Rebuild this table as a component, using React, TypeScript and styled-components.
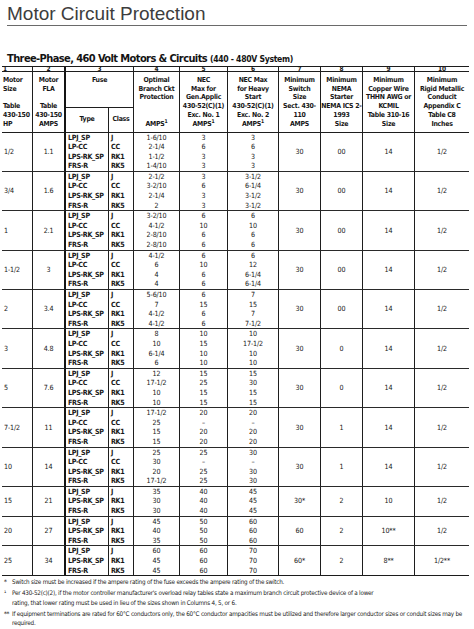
import React from 'react';
import styled, { createGlobalStyle } from 'styled-components';

const Global = createGlobalStyle`
  html, body { margin: 0; padding: 0; background: #fff; }
  body {
    width: 474px; height: 629px; overflow: hidden;
    font-family: "DejaVu Sans Condensed", "Liberation Sans", Arial, sans-serif;
    color: #161616;
  }
  * { box-sizing: border-box; }
`;

const COLS = '31px 33px 43px 25px 46px 48px 51px 42px 42px 52px 54px';

const Page = styled.div`
  display: flex;
  flex-direction: column;
`;

const Title = styled.h1`
  margin: 0 7px;
  padding-top: 3px;
  font-family: "Liberation Sans", Arial, sans-serif;
  font-weight: 400;
  font-size: 19px;
  line-height: 22px;
  color: #3d3d3d;
  border-bottom: 1.5px solid #6a6a6a;
`;

const Subtitle = styled.h2`
  margin: 25.5px 0 0 7px;
  font-size: 11px;
  letter-spacing: -0.6px;
  line-height: 13px;
  font-weight: 700;
  color: #141414;
  white-space: nowrap;
`;

const SubSmall = styled.span`
  font-size: 8.6px;
  letter-spacing: -0.3px;
`;

const Table = styled.div`
  margin-left: 2px;
  width: 467px;
  display: grid;
  grid-template-columns: ${COLS};
  border-top: 1.5px solid #1c1c1c;
  border-bottom: 1.5px solid #1c1c1c;
`;

const rightBorder = (end?: boolean, thick?: boolean) =>
  end ? 'none' : thick ? '2px solid #141414' : '1px solid #1e1e1e';

const NumCell = styled.div<{ $span?: number; $end?: boolean; $left?: boolean; $thick?: boolean }>`
  grid-column: span ${p => p.$span ?? 1};
  height: 5.5px;
  border-right: ${p => rightBorder(p.$end, p.$thick)};
  border-bottom: 1px solid #1e1e1e;
  font-size: 6.5px;
  font-weight: 700;
  line-height: 4.8px;
  text-align: ${p => (p.$left ? 'left' : 'center')};
  padding-left: ${p => (p.$left ? '1px' : '0')};
`;

const HeadCell = styled.div<{ $end?: boolean; $left?: boolean; $thick?: boolean }>`
  height: 60.5px;
  border-right: ${p => rightBorder(p.$end, p.$thick)};
  border-bottom: 1px solid #1e1e1e;
  display: flex;
  flex-direction: column;
  justify-content: space-between;
  padding: ${p => (p.$left ? '4px 0 3px 1px' : '4px 0 3px')};
  font-size: 6.9px;
  letter-spacing: -0.25px;
  font-weight: 700;
  line-height: 8.7px;
  text-align: ${p => (p.$left ? 'left' : 'center')};
  white-space: nowrap;
`;

const HeadBlock = styled.div`
  display: flex;
  flex-direction: column;
`;

const HeadLine = styled.div``;

const FuseHead = styled.div`
  grid-column: span 2;
  height: 60.5px;
  border-right: 1px solid #1e1e1e;
  border-bottom: 1px solid #1e1e1e;
  display: grid;
  grid-template-columns: 43px 24px;
  grid-template-rows: 35.5px 1fr;
  font-size: 6.9px;
  letter-spacing: -0.25px;
  font-weight: 700;
  line-height: 8.7px;
`;

const FuseTitle = styled.div`
  grid-column: span 2;
  text-align: center;
  padding-top: 4px;
  border-bottom: 1px solid #1e1e1e;
`;

const FuseSub = styled.div<{ $end?: boolean }>`
  display: flex;
  align-items: center;
  justify-content: center;
  border-right: ${p => (p.$end ? 'none' : '1px solid #1e1e1e')};
`;

const Sup = styled.sup`
  font-size: 5px;
  line-height: 0;
  vertical-align: 3px;
`;

const Cell = styled.div<{ $left?: boolean; $end?: boolean; $last?: boolean; $bold?: boolean; $thick?: boolean }>`
  border-right: ${p => rightBorder(p.$end, p.$thick)};
  border-bottom: ${p => (p.$last ? 'none' : '1px solid #2a2a2a')};
  display: flex;
  flex-direction: column;
  justify-content: center;
  align-items: ${p => (p.$left ? 'flex-start' : 'center')};
  padding-left: ${p => (p.$left ? '2px' : '0')};
  font-size: 7.1px;
  letter-spacing: ${p => (p.$bold ? '-0.3px' : '-0.15px')};
  line-height: 9.6px;
  font-weight: ${p => (p.$bold ? 700 : 400)};
  white-space: nowrap;
`;

const Line = styled.div`
  height: 9.6px;
`;

const Notes = styled.div`
  padding: 1px 0 0 4px;
  display: flex;
  flex-direction: column;
  gap: 1px;
`;

const Note = styled.div`
  display: grid;
  grid-template-columns: 8px 1fr;
  font-size: 6.3px;
  letter-spacing: -0.22px;
  line-height: 9.8px;
  color: #222;
  white-space: nowrap;
`;

const Mark = styled.span`
  font-size: 6.3px;
`;

type Group = {
  hp: string;
  fla: string;
  fuses: [string, string, string, string, string][];
  sw: string;
  nema: string;
  wire: string;
  conduit: string;
};

const F4: [string, string][] = [
  ['LPJ_SP', 'J'],
  ['LP-CC', 'CC'],
  ['LPS-RK_SP', 'RK1'],
  ['FRS-R', 'RK5'],
];
const F3: [string, string][] = [
  ['LPJ_SP', 'J'],
  ['LPS-RK_SP', 'RK1'],
  ['FRS-R', 'RK5'],
];

const mk = (types: [string, string][], vals: string[][]) =>
  types.map((t, i) => [t[0], t[1], vals[i][0], vals[i][1], vals[i][2]] as [string, string, string, string, string]);

const groups: Group[] = [
  { hp: '1/2', fla: '1.1', fuses: mk(F4, [['1-6/10', '3', '3'], ['2-1/4', '6', '6'], ['1-1/2', '3', '3'], ['1-4/10', '3', '3']]), sw: '30', nema: '00', wire: '14', conduit: '1/2' },
  { hp: '3/4', fla: '1.6', fuses: mk(F4, [['2-1/2', '3', '3-1/2'], ['3-2/10', '6', '6-1/4'], ['2-1/4', '3', '3-1/2'], ['2', '3', '3-1/2']]), sw: '30', nema: '00', wire: '14', conduit: '1/2' },
  { hp: '1', fla: '2.1', fuses: mk(F4, [['3-2/10', '6', '6'], ['4-1/2', '10', '10'], ['2-8/10', '6', '6'], ['2-8/10', '6', '6']]), sw: '30', nema: '00', wire: '14', conduit: '1/2' },
  { hp: '1-1/2', fla: '3', fuses: mk(F4, [['4-1/2', '6', '6'], ['6', '10', '12'], ['4', '6', '6-1/4'], ['4', '6', '6-1/4']]), sw: '30', nema: '00', wire: '14', conduit: '1/2' },
  { hp: '2', fla: '3.4', fuses: mk(F4, [['5-6/10', '6', '7'], ['7', '15', '15'], ['4-1/2', '6', '7'], ['4-1/2', '6', '7-1/2']]), sw: '30', nema: '00', wire: '14', conduit: '1/2' },
  { hp: '3', fla: '4.8', fuses: mk(F4, [['8', '10', '10'], ['10', '15', '17-1/2'], ['6-1/4', '10', '10'], ['6', '10', '10']]), sw: '30', nema: '0', wire: '14', conduit: '1/2' },
  { hp: '5', fla: '7.6', fuses: mk(F4, [['12', '15', '15'], ['17-1/2', '25', '30'], ['10', '15', '15'], ['10', '15', '15']]), sw: '30', nema: '0', wire: '14', conduit: '1/2' },
  { hp: '7-1/2', fla: '11', fuses: mk(F4, [['17-1/2', '20', '20'], ['25', '–', '–'], ['15', '20', '20'], ['15', '20', '20']]), sw: '30', nema: '1', wire: '14', conduit: '1/2' },
  { hp: '10', fla: '14', fuses: mk(F4, [['25', '25', '30'], ['30', '–', '–'], ['20', '25', '30'], ['17-1/2', '25', '30']]), sw: '30', nema: '1', wire: '14', conduit: '1/2' },
  { hp: '15', fla: '21', fuses: mk(F3, [['35', '40', '45'], ['30', '40', '45'], ['30', '40', '45']]), sw: '30*', nema: '2', wire: '10', conduit: '1/2' },
  { hp: '20', fla: '27', fuses: mk(F3, [['45', '50', '60'], ['40', '50', '60'], ['35', '50', '60']]), sw: '60', nema: '2', wire: '10**', conduit: '1/2' },
  { hp: '25', fla: '34', fuses: mk(F3, [['60', '60', '70'], ['45', '60', '70'], ['45', '60', '70']]), sw: '60*', nema: '2', wire: '8**', conduit: '1/2**' },
];

const Stack: React.FC<{ items: string[]; left?: boolean; bold?: boolean; last?: boolean }> = ({ items, left, bold, last }) => (
  <Cell $left={left} $bold={bold} $last={last}>
    {items.map((t, i) => (
      <Line key={i}>{t}</Line>
    ))}
  </Cell>
);

const Lines: React.FC<{ lines: React.ReactNode[] }> = ({ lines }) => (
  <HeadBlock>
    {lines.map((l, i) => (
      <HeadLine key={i}>{l}</HeadLine>
    ))}
  </HeadBlock>
);

const amps = (
  <>
    AMPS<Sup>1</Sup>
  </>
);

export default function App() {
  return (
    <Page>
      <Global />
      <Title>Motor Circuit Protection</Title>
      <Subtitle>
        Three-Phase, 460 Volt Motors &amp; Circuits <SubSmall>(440 - 480V System)</SubSmall>
      </Subtitle>
      <Table>
        <NumCell $left>1</NumCell>
        <NumCell $thick>2</NumCell>
        <NumCell $span={2}>3</NumCell>
        <NumCell>4</NumCell>
        <NumCell>5</NumCell>
        <NumCell>6</NumCell>
        <NumCell>7</NumCell>
        <NumCell>8</NumCell>
        <NumCell>9</NumCell>
        <NumCell $end>10</NumCell>

        <HeadCell $left>
          <Lines lines={['Motor', 'Size']} />
          <Lines lines={['Table', '430-150', 'HP']} />
        </HeadCell>
        <HeadCell $thick>
          <Lines lines={['Motor', 'FLA']} />
          <Lines lines={['Table', '430-150', 'AMPS']} />
        </HeadCell>
        <FuseHead>
          <FuseTitle>Fuse</FuseTitle>
          <FuseSub>Type</FuseSub>
          <FuseSub $end>Class</FuseSub>
        </FuseHead>
        <HeadCell>
          <Lines lines={['Optimal', 'Branch Ckt', 'Protection']} />
          <Lines lines={[amps]} />
        </HeadCell>
        <HeadCell>
          <Lines lines={['NEC', 'Max for', 'Gen.Applic', '430-52(C)(1)', 'Exc. No. 1', amps]} />
        </HeadCell>
        <HeadCell>
          <Lines lines={['NEC Max', 'for Heavy', 'Start', '430-52(C)(1)', 'Exc. No. 2', amps]} />
        </HeadCell>
        <HeadCell>
          <Lines lines={['Minimum', 'Switch', 'Size', 'Sect. 430-', '110', 'AMPS']} />
        </HeadCell>
        <HeadCell>
          <Lines lines={['Minimum', 'NEMA', 'Starter', 'NEMA ICS 2-', '1993', 'Size']} />
        </HeadCell>
        <HeadCell>
          <Lines lines={['Minimum', 'Copper Wire', 'THHN AWG or', 'KCMIL', 'Table 310-16', 'Size']} />
        </HeadCell>
        <HeadCell $end>
          <Lines lines={['Minimum', 'Rigid Metallic', 'Conducit', 'Appendix C', 'Table C8', 'Inches']} />
        </HeadCell>

        {groups.map((g, gi) => {
          const last = gi === groups.length - 1;
          return (
            <React.Fragment key={gi}>
              <Cell $left $last={last}>{g.hp}</Cell>
              <Cell $last={last} $thick>{g.fla}</Cell>
              <Stack items={g.fuses.map(f => f[0])} left bold last={last} />
              <Stack items={g.fuses.map(f => f[1])} left bold last={last} />
              <Stack items={g.fuses.map(f => f[2])} last={last} />
              <Stack items={g.fuses.map(f => f[3])} last={last} />
              <Stack items={g.fuses.map(f => f[4])} last={last} />
              <Cell $last={last}>{g.sw}</Cell>
              <Cell $last={last}>{g.nema}</Cell>
              <Cell $last={last}>{g.wire}</Cell>
              <Cell $last={last} $end>{g.conduit}</Cell>
            </React.Fragment>
          );
        })}
      </Table>
      <Notes>
        <Note>
          <Mark>*</Mark>
          <span>Switch size must be increased if the ampere rating of the fuse exceeds the ampere rating of the switch.</span>
        </Note>
        <Note>
          <Mark>¹</Mark>
          <span>
            Per 430-52(c)(2), if the motor controller manufacturer's overload relay tables state a maximum branch circuit protective device of a lower
            <br />
            rating, that lower rating must be used in lieu of the sizes shown in Columns 4, 5, or 6.
          </span>
        </Note>
        <Note>
          <Mark>**</Mark>
          <span>
            If equipment terminations are rated for 60°C conductors only, the 60°C conductor ampacities must be utilized and therefore larger conductor sizes or conduit sizes may be
            <br />
            required.
          </span>
        </Note>
      </Notes>
    </Page>
  );
}
